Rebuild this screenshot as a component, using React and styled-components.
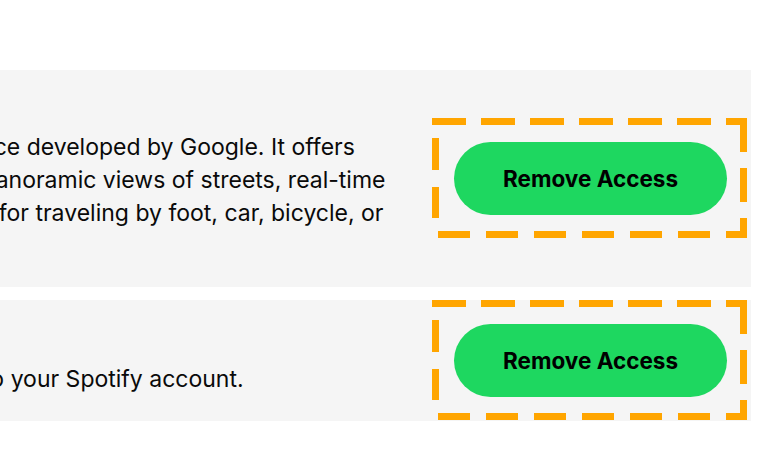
import React from "react";
import styled, { createGlobalStyle } from "styled-components";

const GlobalStyle = createGlobalStyle`
  html, body { margin: 0; padding: 0; background: #ffffff; }
  body { font-family: Inter, "Noto Sans", sans-serif; color: #000; overflow: hidden; }
`;

const Page = styled.main`
  display: flex;
  flex-direction: column;
  gap: 13px;
  padding-top: 70px;
  margin: 0 9px 0 -431px;
`;

const Panel = styled.section`
  display: flex;
  align-items: center;
  background: #f5f5f5;
  padding: 24px;
`;

const Info = styled.div`
  flex: 1;
  min-width: 0;
  display: flex;
  flex-direction: column;
  gap: 4px;
`;

const Title = styled.h3`
  margin: 0;
  font-size: 23px;
  line-height: 33px;
  font-weight: 700;
`;

const Description = styled.p`
  margin: 0;
  font-size: 23px;
  line-height: 33px;
  font-weight: 400;
  color: #0a0a0a;
  white-space: nowrap;
`;

const ActionCell = styled.div`
  position: relative;
  flex-shrink: 0;
  margin-left: auto;
`;

const RemoveButton = styled.button`
  display: flex;
  align-items: center;
  justify-content: center;
  width: 273px;
  height: 73px;
  border: none;
  border-radius: 999px;
  background: #1ed760;
  color: #000;
  font-family: Inter, "Noto Sans", sans-serif;
  font-size: 22.5px;
  font-weight: 700;
  cursor: pointer;
`;

const Outline = styled.svg`
  position: absolute;
  top: -24px;
  left: -22px;
  width: 315px;
  height: 120px;
  pointer-events: none;
  overflow: visible;
`;

const ORANGE = "#ffa500";

function Highlight() {
  return (
    <Outline viewBox="0 0 315 120" aria-hidden="true">
      <g stroke={ORANGE} strokeWidth="7" fill="none">
        <line x1="0" y1="3.5" x2="315" y2="3.5" strokeDasharray="34 15" />
        <line x1="311.5" y1="0" x2="311.5" y2="120" strokeDasharray="34 16" />
        <line x1="0" y1="116.5" x2="315" y2="116.5" strokeDasharray="32 16" strokeDashoffset="42" />
        <line x1="3.5" y1="0" x2="3.5" y2="120" strokeDasharray="0 20 32 17 31 100" />
      </g>
    </Outline>
  );
}

const apps = [
  {
    name: "Google Maps",
    lines: [
      "Google Maps is a web mapping service developed by Google. It offers",
      "aerial photography, plus interactive panoramic views of streets, real-time",
      "traffic conditions, and route planning for traveling by foot, car, bicycle, or",
      "air, or public transportation.",
    ],
  },
  {
    name: "Spotify Mobile",
    lines: ["Their app has been granted access to your Spotify account."],
  },
];

export default function App() {
  return (
    <>
      <GlobalStyle />
      <Page>
        {apps.map((app) => (
          <Panel key={app.name}>
            <Info>
              <Title>{app.name}</Title>
              <Description>
                {app.lines.map((l, i) => (
                  <React.Fragment key={i}>
                    {i > 0 && <br />}
                    {l}
                  </React.Fragment>
                ))}
              </Description>
            </Info>
            <ActionCell>
              <RemoveButton>Remove Access</RemoveButton>
              <Highlight />
            </ActionCell>
          </Panel>
        ))}
      </Page>
    </>
  );
}
